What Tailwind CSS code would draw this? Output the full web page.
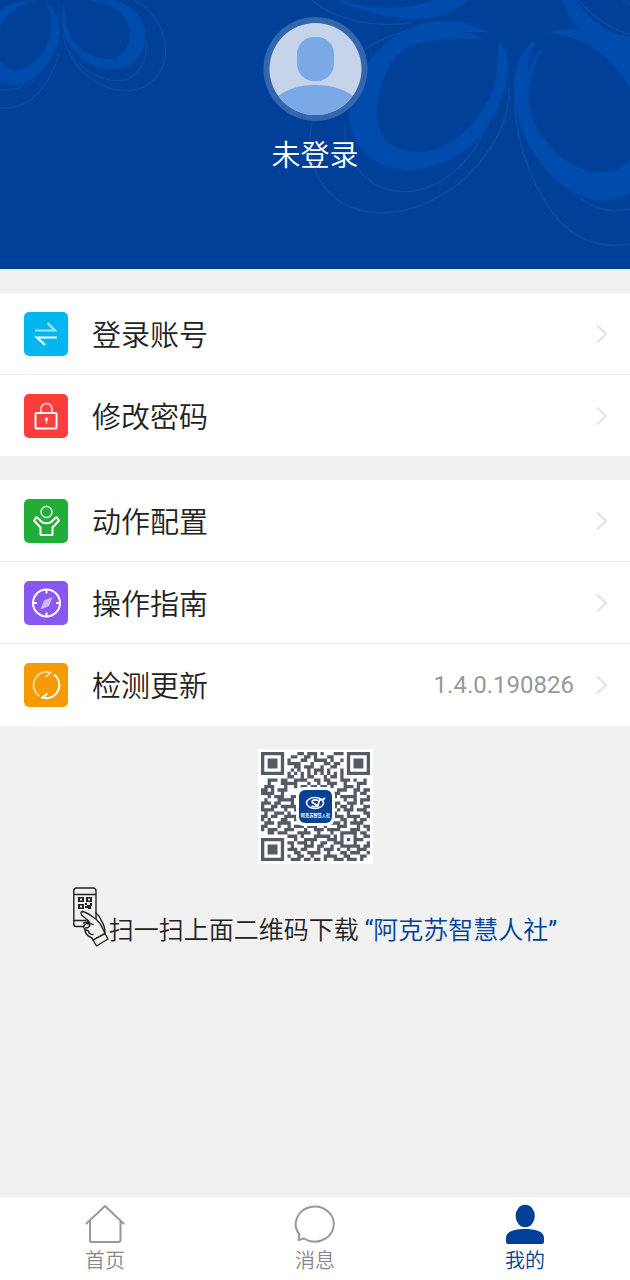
<!DOCTYPE html>
<html lang="zh-CN">
<head>
<meta charset="utf-8">
<meta name="viewport" content="width=device-width, initial-scale=1">
<title>我的</title>
<script src="https://cdn.jsdelivr.net/npm/@tailwindcss/browser@4"></script>
</head>
<body class="flex min-h-screen flex-col bg-[#f1f1f1] font-['Noto_Sans_CJK_SC',sans-serif] font-[350] text-[#222]">

<header class="relative flex h-[269px] flex-col items-center overflow-hidden bg-[#004098] pt-4">
  <!-- decorative rings -->
  <svg class="absolute inset-0 h-full w-full" viewBox="0 0 630 269" preserveAspectRatio="xMidYMid slice" aria-hidden="true">
    <g transform="scale(.33333)" fill="#004cac">
      <path d="M0 35C25 10 60 0 110 0C55 12 20 45 0 78Z"/>
      <path d="M140 10C152 35 158 70 150 110C140 160 95 205 45 209C25 208 10 198 0 187V243C20 255 45 260 70 252C130 225 175 160 180 90C178 55 160 25 140 10Z"/>
      <path d="M192 10C178 60 185 105 215 145C250 190 300 210 355 207C405 198 438 155 436 100C430 50 395 10 340 0H250C310 5 355 20 378 60C400 105 390 155 345 175C300 185 240 160 215 115C195 80 195 45 192 10Z"/>
      <g fill="none" stroke="#0b4ba6" stroke-width="4">
        <path d="M0 324C90 330 150 260 177 160"/><path d="M0 271C40 272 75 262 105 240"/>
        <path d="M188 100C205 200 290 272 385 273C470 265 510 190 493 115C480 60 445 20 400 0"/>
        <path d="M205 150C250 220 320 250 375 240C420 225 443 180 440 120"/>
      </g>
    </g>
    <g transform="translate(315) scale(.33333)" fill="#004cac">
      <path d="M85 0C130 20 190 27 250 22C300 18 330 12 355 0H460C425 35 370 55 300 57C210 55 130 35 65 0Z"/>
      <path d="M518 96C450 55 350 50 265 92C180 140 110 235 102 340C100 430 170 500 270 511C400 512 500 430 545 330C580 260 595 180 555 122C545 150 550 180 544 230C530 320 460 400 380 440C310 470 235 455 205 410C170 355 185 260 230 185C275 125 350 112 500 118C490 105 465 98 440 96Z"/>
      <path d="M655 124C605 165 585 240 603 330C625 440 700 540 790 585C850 610 900 605 945 580V478C915 515 870 522 815 512C740 490 665 410 645 330C635 270 650 200 684 146C660 155 655 180 642 210C635 220 640 160 662 132Z"/>
      <path d="M700 98C760 78 840 85 900 125L945 168V265C910 205 870 160 800 125C770 110 740 105 700 98Z"/>
      <path d="M742 0C755 45 785 90 835 115C870 135 910 155 945 165V110C890 105 830 70 780 0Z"/>
      <g fill="none" stroke="#0b4ba6" stroke-width="5">
        <path d="M-10 0C60 60 180 85 290 68"/>
        <path d="M290 90C230 100 130 140 60 230C-20 330-40 450 20 550C80 640 200 660 320 615C460 560 590 410 583 250"/>
        <path d="M90 370C80 470 150 570 260 575C370 580 480 480 515 370"/>
        <path d="M598 310C605 440 660 580 735 665C800 730 870 745 945 732"/>
        <path d="M790 590C840 630 890 640 945 627"/>
        <path d="M790 0C830 50 890 85 945 105M925 0L945 14"/>
      </g>
    </g>
  </svg>
  <svg class="relative h-[105px] w-[105px]" viewBox="0 0 105 105" role="img" aria-label="头像">
    <defs><clipPath id="face"><circle cx="52.5" cy="53" r="46"/></clipPath></defs>
    <circle cx="52.5" cy="53" r="52" fill="#3366ac"/>
    <circle cx="52.5" cy="53" r="46" fill="#c5d4ea"/>
    <g fill="#7ba8e6" clip-path="url(#face)">
      <rect x="34" y="21" width="37" height="44" rx="17"/>
      <path d="M10 84C22 73 36 69 52 69C69 69 83 73 95 84V105H10Z"/>
    </g>
  </svg>
  <h1 class="relative mt-3 text-[29px] leading-10 font-[350] text-white">未登录</h1>
</header>

<main class="flex-1">
  <ul class="mt-6 bg-white">
    <li class="border-b border-[#ececec]">
      <button type="button" class="flex h-[81px] w-full items-center pr-[22px] pl-6 text-left">
        <svg class="h-11 w-11 shrink-0" viewBox="0 0 44 44" fill="none" stroke="#fff" stroke-width="2.200" aria-hidden="true"><rect width="44" height="44" rx="5" fill="#02b7ee" stroke="none"/><path opacity=".65" d="M11 18.500H31L23.500 11"/><path d="M33 25.500H13L21 33"/></svg>
        <span class="ml-6 flex-1 text-[29px]">登录账号</span>
        <svg class="h-5 w-3 shrink-0" viewBox="0 0 12 20" fill="none" stroke="#e2e2e2" stroke-width="2" aria-hidden="true"><path d="M1 1.500L10 10L1 18.500"/></svg>
      </button>
    </li>
    <li>
      <button type="button" class="flex h-[81px] w-full items-center pr-[22px] pl-6 text-left">
        <svg class="h-11 w-11 shrink-0" viewBox="0 0 44 44" fill="none" stroke="#fff" stroke-width="2" aria-hidden="true"><rect width="44" height="44" rx="5" fill="#fc3d3b" stroke="none"/><path opacity=".65" d="M17 18V15a5.500 5.500 0 0 1 11 0V18"/><rect x="11.500" y="19" width="21" height="15.500" rx="1"/><circle cx="22.500" cy="25" r="1.800" fill="#fff" stroke="none" opacity=".8"/><path stroke-width="1.500" opacity=".8" d="M22.500 25V29.500"/></svg>
        <span class="ml-6 flex-1 text-[29px]">修改密码</span>
        <svg class="h-5 w-3 shrink-0" viewBox="0 0 12 20" fill="none" stroke="#e2e2e2" stroke-width="2" aria-hidden="true"><path d="M1 1.500L10 10L1 18.500"/></svg>
      </button>
    </li>
  </ul>

  <ul class="mt-6 bg-white">
    <li class="border-b border-[#ececec]">
      <button type="button" class="flex h-[81px] w-full items-center pr-[22px] pl-6 text-left">
        <svg class="h-11 w-11 shrink-0" viewBox="0 0 44 44" fill="none" stroke="#fff" stroke-width="2" stroke-linejoin="round" aria-hidden="true"><rect width="44" height="44" rx="5" fill="#22ac38" stroke="none"/><circle opacity=".65" cx="22.500" cy="13" r="5.500"/><path d="M12.500 18L18.500 23.500Q22.500 25 26.500 23.500L32.500 18L35 21.500L28.500 28.500V36H16.500V28.500L10 21.500Z"/></svg>
        <span class="ml-6 flex-1 text-[29px]">动作配置</span>
        <svg class="h-5 w-3 shrink-0" viewBox="0 0 12 20" fill="none" stroke="#e2e2e2" stroke-width="2" aria-hidden="true"><path d="M1 1.500L10 10L1 18.500"/></svg>
      </button>
    </li>
    <li class="border-b border-[#ececec]">
      <button type="button" class="flex h-[81px] w-full items-center pr-[22px] pl-6 text-left">
        <svg class="h-11 w-11 shrink-0" viewBox="0 0 44 44" fill="none" stroke="#fff" stroke-width="2" aria-hidden="true"><rect width="44" height="44" rx="5" fill="#8957f1" stroke="none"/><circle cx="22.500" cy="22" r="13.500"/><path d="M22.500 8.500V12.500M22.500 31.500V35.500M9 22H13M32 22H36"/><path opacity=".6" fill="#fff" stroke="none" d="M28.500 16L25 25L16.500 28.500L20 19.500Z"/></svg>
        <span class="ml-6 flex-1 text-[29px]">操作指南</span>
        <svg class="h-5 w-3 shrink-0" viewBox="0 0 12 20" fill="none" stroke="#e2e2e2" stroke-width="2" aria-hidden="true"><path d="M1 1.500L10 10L1 18.500"/></svg>
      </button>
    </li>
    <li>
      <button type="button" class="flex h-[82px] w-full items-center pr-[22px] pl-6 text-left">
        <svg class="h-11 w-11 shrink-0" viewBox="0 0 44 44" fill="none" stroke="#fff" stroke-width="2" stroke-linejoin="round" aria-hidden="true"><rect width="44" height="44" rx="5" fill="#f59a00" stroke="none"/><path opacity=".6" d="M15.500 33A13.200 13.200 0 0 1 22 8.800L27 9.500L21.500 14"/><path d="M30 11.500A13.200 13.200 0 0 1 23.500 35.200L18 34.800L23.500 30.500"/></svg>
        <span class="ml-6 flex-1 text-[29px]">检测更新</span>
        <span class="mr-[22px] font-[Roboto,sans-serif] text-2xl font-normal text-[#999]">1.4.0.190826</span>
        <svg class="h-5 w-3 shrink-0" viewBox="0 0 12 20" fill="none" stroke="#e2e2e2" stroke-width="2" aria-hidden="true"><path d="M1 1.500L10 10L1 18.500"/></svg>
      </button>
    </li>
  </ul>

  <section class="flex flex-col items-center pt-[23px]">
    <div class="relative h-[115px] w-[115px] bg-white p-[3px]">
      <svg class="h-full w-full" viewBox="0 0 33 33" role="img" aria-label="二维码"><path id="qr" fill="#555b66"/></svg>
      <svg class="absolute inset-0 h-full w-full" viewBox="0 0 115 115" aria-hidden="true">
        <rect x="38" y="38" width="39" height="39" rx="8" fill="#fff"/>
        <rect x="41" y="41" width="33" height="33" rx="6" fill="#064194"/>
        <g fill="none" stroke="#fff"><ellipse cx="57" cy="54" rx="8.500" ry="5.500" stroke-width="1.500"/><path stroke-width="1.800" d="M60 51.500C55 49.500 52 53 56 54.500S59 59 53.500 57M62 49L59.500 58M61 50Q64 52 67 49"/></g>
        <text x="57.500" y="68" fill="#fff" font-size="4.200" font-weight="700" text-anchor="middle">阿克苏智慧人社</text>
      </svg>
    </div>
    <div class="mt-[23px] flex items-end">
      <svg class="h-[60px] w-9 shrink-0" viewBox="0 0 36 60" fill="none" stroke="#222" stroke-width="1.400" stroke-linejoin="round" stroke-linecap="round" aria-hidden="true">
        <path d="M11 39.500H3Q.8 39.500 .8 37V4Q.8 1 3.500 1H20Q23 1 23 4V32M.8 7.500H23M.8 33.500H13"/>
        <path fill="#222" stroke="none" fill-rule="evenodd" d="M5 10h6v5H5zM7 11.500v2h2v-2zM13 10h6v5h-6zM15 11.500v2h2v-2zM5 17h6v5H5zM7 18.500v2h2v-2zM12 16h2v2h3v-2h2v3h-1v3h-3v-1h-3v-2h2v-1h-2z"/>
        <path fill="#f1f1f1" d="M20 53L19 51Q12 48 12 43L10.500 40Q12 35.500 15.500 37L14.500 33L8.500 28Q7 24.500 10 24.500Q15 26 20 30Q26 34 29 40L32 46.500Z"/>
        <path d="M20 53L32 46.500L35 52L23.500 59ZM23 26Q27 29 28.500 34Q32 39 32 46.500M14.500 33Q17 37 20 37.500M10.500 36Q15 34 17 38Q16 41 12.500 41M12.500 43Q16 43 16 46Q18 48 20 47.500"/>
      </svg>
      <p class="pb-[2px] text-[25px] leading-7">扫一扫上面二维码下载 <a href="#download" class="text-[#004098]"><span class="font-[Roboto,sans-serif] font-normal">“</span>阿克苏智慧人社<span class="font-[Roboto,sans-serif] font-normal">”</span></a></p>
    </div>
  </section>
</main>

<nav class="sticky bottom-0 flex h-[83px] bg-white text-xl leading-6 text-[#888]">
  <a href="#home" class="flex flex-1 flex-col items-center pt-[7px]">
    <svg class="h-11 w-11" viewBox="0 0 44 44" fill="none" stroke="#999" stroke-width="2" stroke-linejoin="round" stroke-linecap="round" aria-hidden="true"><path d="M3.500 19.500L22 2L40.500 19.500M7 17V36Q7 38 9 38H35Q37.500 38 37.500 36V17"/></svg>
    <span>首页</span>
  </a>
  <a href="#messages" class="flex flex-1 flex-col items-center pt-[7px]">
    <svg class="h-11 w-11" viewBox="0 0 44 44" fill="none" stroke="#999" stroke-width="2" stroke-linejoin="round" aria-hidden="true"><path d="M11 34.500L5.500 36L6.500 30.500A19 17.500 0 1 1 11 34.500Z"/></svg>
    <span>消息</span>
  </a>
  <a href="#mine" aria-current="page" class="flex flex-1 flex-col items-center pt-[7px] text-[#004098]">
    <svg class="h-11 w-11" viewBox="0 0 44 44" fill="#004098" aria-hidden="true"><ellipse cx="22.200" cy="12" rx="9.600" ry="11.200"/><path d="M3 34C3 27 12 25 22 25S41 27 41 34V38Q41 40 39 40H5Q3 40 3 38Z"/></svg>
    <span>我的</span>
  </a>
</nav>

<script>
  const rows = [
    "111111100001101110100011101111111",
    "100000100110011010001100001000001",
    "101110101000110011110100101011101",
    "101110101111000100011011001011101",
    "101110100011011100100110001011101",
    "100000100101001011101000101000001",
    "111111101010101010101010101111111",
    "000000001100101100010110100000000",
    "001110110011110011011000111010010",
    "001000111110001001001110010001110",
    "011100010010110110110100011101000",
    "110101110000000000000001110011011",
    "111100100000000000000011000010110",
    "001011100110000000001110111110001",
    "010001111100000000000100010010111",
    "111011000100000000001111001110100",
    "100110111110000000000010110100011",
    "111100010010000000001001011101110",
    "010011101000000000001110001000011",
    "110110011110000000000011101111001",
    "101000110010000000001000110010110",
    "011101111000000000000111010111100",
    "110001001011101110010001110001011",
    "101110011100010011101111000111001",
    "001101110001111001000100111110110",
    "000000001110100011111010100010011",
    "111111100010011110001110101011100",
    "100000101101110100110011100010001",
    "101110100100011101100100111111011",
    "101110101110110001011101001001110",
    "101110100011001111001000110111001",
    "100000101001100100011110011000110",
    "111111100111011011010011101110100"
  ];
  document.getElementById("qr").setAttribute("d", rows.map((r, y) =>
    [...r].map((c, x) => c === "1" ? `M${x} ${y}h1v1h-1z` : "").join("")).join(""));
</script>
</body>
</html>
